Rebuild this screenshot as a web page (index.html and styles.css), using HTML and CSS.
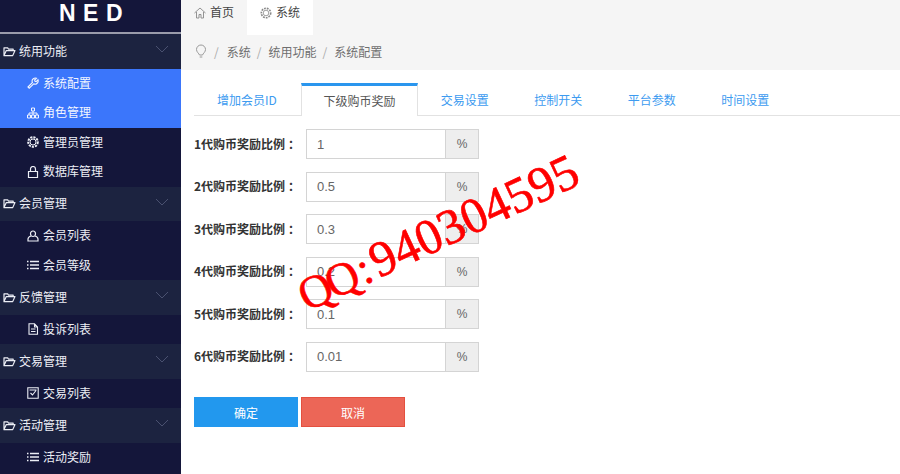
FILE: index.html
```html
<!DOCTYPE html>
<html lang="zh">
<head>
<meta charset="utf-8">
<title>NED</title>
<link rel="stylesheet" href="styles.css">
</head>
<body>
<svg class="defs" width="0" height="0">
  <defs>
    <symbol id="folder" viewBox="0 0 14 12"><path d="M1 10.500V2h4l1 1.500h5V5M1 10.500 3.500 5H13l-2.500 5.500z" fill="none" stroke="currentColor" stroke-width="1.300" stroke-linejoin="round"/></symbol>
    <symbol id="chev" viewBox="0 0 14 8"><path d="M1 1l6 6 6-6" fill="none" stroke="currentColor" stroke-width="1"/></symbol>
    <symbol id="list" viewBox="0 0 12 12"><path d="M0 2.500h1.500M3 2.500h9M0 6h1.500M3 6h9M0 9.500h1.500M3 9.500h9" fill="none" stroke="currentColor" stroke-width="1.300"/></symbol>
  </defs>
</svg>
<div class="app">
  <aside class="sidebar">
    <div class="logo">NED</div>
    <div class="group">
      <div class="group-head"><svg class="ico-folder"><use href="#folder"/></svg><span>统用功能</span><svg class="ico-chev"><use href="#chev"/></svg></div>
      <a class="item active"><svg class="ico" viewBox="0 0 12 12"><path d="M1 10 5.500 5.500a3 3 0 0 1 .8-3.800 3.200 3.200 0 0 1 3.200-.5L7.600 3l.4 1.200 1.200.4L11 2.800a3.200 3.200 0 0 1-.5 3.100 3 3 0 0 1-3.800.9L2.200 11.200z" fill="none" stroke="currentColor" stroke-width="1.100"/></svg><span>系统配置</span></a>
      <a class="item active"><svg class="ico" viewBox="0 0 12 12"><path d="M4.500 1h3v3h-3zM.5 8h3v3h-3zM4.500 8h3v3h-3zM8.500 8h3v3h-3zM6 4v4M2 8V6h8v2" fill="none" stroke="currentColor" stroke-width="1"/></svg><span>角色管理</span></a>
      <a class="item"><svg class="ico" viewBox="0 0 12 12"><circle cx="6" cy="6" r="3" fill="none" stroke="currentColor" stroke-width="1"/><circle cx="6" cy="6" r="4.800" fill="none" stroke="currentColor" stroke-width="2" stroke-dasharray="2.200 1"/></svg><span>管理员管理</span></a>
      <a class="item"><svg class="ico" viewBox="0 0 12 12"><path d="M1.500 5.500h9v6h-9zM3.500 5.500V3a2.500 2.500 0 0 1 5 0v2.500" fill="none" stroke="currentColor" stroke-width="1.200"/></svg><span>数据库管理</span></a>
    </div>
    <div class="group">
      <div class="group-head"><svg class="ico-folder"><use href="#folder"/></svg><span>会员管理</span><svg class="ico-chev"><use href="#chev"/></svg></div>
      <a class="item"><svg class="ico" viewBox="0 0 12 12"><path d="M6 1a2.500 2.500 0 0 1 2.500 2.700c0 1.500-1 2.800-2.500 2.800S3.500 5.200 3.500 3.700A2.500 2.500 0 0 1 6 1zM4 6c-2 .6-3 1.500-3 3v2h10V9c0-1.500-1-2.400-3-3" fill="none" stroke="currentColor" stroke-width="1.200"/></svg><span>会员列表</span></a>
      <a class="item"><svg class="ico"><use href="#list"/></svg><span>会员等级</span></a>
    </div>
    <div class="group">
      <div class="group-head"><svg class="ico-folder"><use href="#folder"/></svg><span>反馈管理</span><svg class="ico-chev"><use href="#chev"/></svg></div>
      <a class="item"><svg class="ico" viewBox="0 0 12 12"><path d="M2 .8h5.500L10.500 4v7.200H2zM7.500.8V4h3M4 6h4.500M4 8.500h4.500" fill="none" stroke="currentColor" stroke-width="1.100"/></svg><span>投诉列表</span></a>
    </div>
    <div class="group">
      <div class="group-head"><svg class="ico-folder"><use href="#folder"/></svg><span>交易管理</span><svg class="ico-chev"><use href="#chev"/></svg></div>
      <a class="item"><svg class="ico" viewBox="0 0 12 12"><path d="M.8.8h10.400v10.400H.8zM3.500 6l2 2 3.500-4.500M2.500 3h7" fill="none" stroke="currentColor" stroke-width="1.100"/></svg><span>交易列表</span></a>
    </div>
    <div class="group">
      <div class="group-head"><svg class="ico-folder"><use href="#folder"/></svg><span>活动管理</span><svg class="ico-chev"><use href="#chev"/></svg></div>
      <a class="item"><svg class="ico"><use href="#list"/></svg><span>活动奖励</span></a>
    </div>
  </aside>
  <main class="main">
    <nav class="topbar">
      <a class="top-tab"><svg class="top-ico" viewBox="0 0 12 12"><path d="M.5 6 6 1l5.500 5M2.500 5v6h2.500V7.500h2V11h2.500V5" fill="none" stroke="currentColor" stroke-width=".9"/></svg><span>首页</span></a>
      <a class="top-tab current"><svg class="top-ico" viewBox="0 0 12 12"><circle cx="6" cy="6" r="2.800" fill="none" stroke="currentColor" stroke-width=".8"/><circle cx="6" cy="6" r="4.700" fill="none" stroke="currentColor" stroke-width="1.600" stroke-dasharray="1.800 1"/></svg><span>系统</span></a>
    </nav>
    <div class="crumbs">
      <svg class="pin" viewBox="0 0 12 15"><path d="M6 1a4.500 4.500 0 0 0-4.500 4.500C1.500 8 4 9.500 4.500 11h3C8 9.500 10.500 8 10.500 5.500A4.500 4.500 0 0 0 6 1zM4.700 13h2.600" fill="none" stroke="currentColor" stroke-width="1"/></svg>
      <span class="sep first">/</span><span>系统</span><span class="sep">/</span><span>统用功能</span><span class="sep">/</span><span>系统配置</span>
    </div>
    <section class="content">
      <div class="tabs">
        <a class="tab">增加会员ID</a>
        <a class="tab on">下级购币奖励</a>
        <a class="tab">交易设置</a>
        <a class="tab">控制开关</a>
        <a class="tab">平台参数</a>
        <a class="tab">时间设置</a>
      </div>
      <form class="form">
        <div class="row"><label class="label">1代购币奖励比例<span class="colon">：</span></label><div class="field"><span class="value">1</span></div><span class="addon">%</span></div>
        <div class="row"><label class="label">2代购币奖励比例<span class="colon">：</span></label><div class="field"><span class="value">0.5</span></div><span class="addon">%</span></div>
        <div class="row"><label class="label">3代购币奖励比例<span class="colon">：</span></label><div class="field"><span class="value">0.3</span></div><span class="addon">%</span></div>
        <div class="row"><label class="label">4代购币奖励比例<span class="colon">：</span></label><div class="field"><span class="value">0.2</span></div><span class="addon">%</span></div>
        <div class="row"><label class="label">5代购币奖励比例<span class="colon">：</span></label><div class="field"><span class="value">0.1</span></div><span class="addon">%</span></div>
        <div class="row"><label class="label">6代购币奖励比例<span class="colon">：</span></label><div class="field"><span class="value">0.01</span></div><span class="addon">%</span></div>
        <div class="actions">
          <button type="button" class="btn ok">确定</button>
          <button type="button" class="btn cancel">取消</button>
        </div>
      </form>
    </section>
  </main>
</div>
<div class="watermark"><span class="wm-qq">QQ</span><span class="wm-colon">:</span>940304595</div>
</body>
</html>
```

FILE: styles.css
```css
* { box-sizing: border-box; }
html, body { margin: 0; padding: 0; }
body {
  width: 900px;
  height: 474px;
  overflow: hidden;
  position: relative;
  background: #fff;
  color: #333;
  font: 12px/1.4 "Noto Sans CJK SC", "Liberation Sans", sans-serif;
}
.defs { position: absolute; }
.app { display: flex; height: 474px; }

.sidebar {
  width: 181px;
  flex: none;
  background: #14163a;
  color: #eceef5;
  overflow: hidden;
}
.logo {
  height: 34px;
  border-bottom: 2px solid #9a9cab;
  color: #fff;
  font: 700 23px/27px "Liberation Sans", sans-serif;
  padding-left: 59px;
  letter-spacing: 7.500px;
}
.group-head {
  height: 34.500px;
  background: #1c2340;
  display: flex;
  align-items: center;
  padding-left: 3px;
}
.ico-folder { width: 13px; height: 11px; margin-right: 3px; flex: none; }
.ico-chev { width: 14px; height: 8px; margin-left: auto; margin-right: 12px; margin-top: -4px; color: #4a5170; flex: none; }
.item {
  height: 29.500px;
  display: flex;
  align-items: center;
  padding-left: 27px;
}
.item.active { background: #3b76fb; color: #f2f5ff; }
.ico { width: 12px; height: 12px; margin-right: 4px; flex: none; }

.main { flex: 1; min-width: 0; display: flex; flex-direction: column; background: #fff; }
.topbar { height: 35px; background: #f5f5f5; display: flex; padding-left: 13px; }
.top-tab {
  width: 53px;
  display: flex;
  align-items: center;
  height: 35px;
  padding-bottom: 10px;
  color: #444;
}
.top-tab.current { width: 66px; background: #fff; padding-left: 13px; }
.top-ico { width: 12px; height: 12px; margin-right: 4px; color: #888; flex: none; }
.crumbs {
  height: 35px;
  background: #f5f5f5;
  display: flex;
  align-items: center;
  padding-left: 14px;
  color: #6f6f6f;
}
.pin { width: 12px; height: 15px; color: #999; margin-right: 7px; margin-top: -2px; }
.sep { margin: 0 7px 0 6px; color: #aaa; }
.sep.first { margin: 0 8px 0 0; }

.content { flex: 1; padding: 13px 0 0 13px; }
.tabs {
  display: flex;
  height: 33px;
  border-bottom: 1px solid #e2e2e2;
}
.tab {
  padding: 0 22.750px;
  line-height: 33px;
  color: #3d9bf0;
}
.tab:first-child { padding: 0 23px; width: 107px; }
.tab.on {
  height: 33px;
  padding: 0 21.500px;
  margin: 0 0 -1px;
  border: 1px solid #e2e2e2;
  border-top: 3px solid #2a96ee;
  border-bottom: 0;
  background: #fff;
  line-height: 29px;
  color: #555;
}
.form { padding-top: 13px; }
.row { display: flex; align-items: center; height: 30px; margin-bottom: 12.500px; }
.label { width: 112px; flex: none; font-weight: 700; color: #333; white-space: nowrap; }
.colon { margin-left: 3px; }
.field {
  width: 140px;
  height: 30px;
  background: #fff;
  border: 1px solid #d4d4d4;
  display: flex;
  align-items: center;
  padding-left: 10px;
  font: 13px "Liberation Sans", sans-serif;
  color: #666;
}
.addon {
  width: 33px;
  height: 30px;
  background: #eee;
  border: 1px solid #d4d4d4;
  border-left: 0;
  display: flex;
  align-items: center;
  justify-content: center;
  font: 12px "Liberation Sans", sans-serif;
  color: #666;
}
.actions { display: flex; gap: 3px; padding-top: 13px; }
.btn {
  width: 104px;
  height: 30px;
  padding: 0;
  border: 1px solid;
  border-radius: 0;
  color: #fff;
  font: 12px "Noto Sans CJK SC", sans-serif;
}
.btn.ok { background: #2298ee; border-color: #2298ee; }
.btn.cancel { background: #ec6657; border-color: #e4503f; }

.watermark {
  position: absolute;
  left: 286px;
  top: 206px;
  color: #f00;
  font: 50px/52px "Liberation Serif", serif;
  white-space: nowrap;
  -webkit-text-stroke: .6px #f00;
  transform: rotate(-25deg);
  pointer-events: none;
}
.wm-qq { font-size: 46px; letter-spacing: -4px; }
.wm-colon { margin: 0 3px 0 5px; font-size: 46px; }
```
